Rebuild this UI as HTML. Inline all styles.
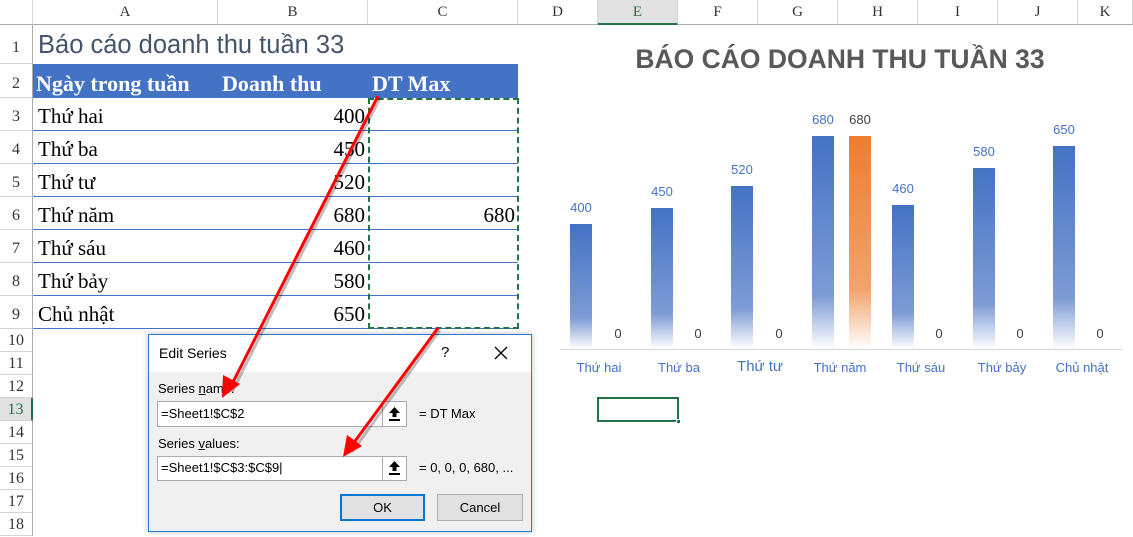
<!DOCTYPE html>
<html><head><meta charset="utf-8"><style>
*{margin:0;padding:0;box-sizing:border-box}
body{width:1133px;height:536px;overflow:hidden;background:#fff;position:relative;font-family:"Liberation Serif",serif}
.a{position:absolute}
.ch{position:absolute;top:0;height:25px;border-right:1px solid #d4d4d4;border-bottom:1px solid #ababab;text-align:center;font-size:15px;line-height:25px;color:#333;font-family:"Liberation Serif",serif}
.rh{position:absolute;left:0;width:33px;border-right:1px solid #ababab;border-bottom:1px solid #d4d4d4;text-align:center;font-size:16px;color:#333}
.cell{position:absolute;font-size:21px;color:#000;line-height:33px;height:33px}
.bl{position:absolute;left:33px;width:485px;height:1px;background:#4472c4}
.bar{position:absolute;width:22px}
.bb{background:linear-gradient(to bottom,#4472c4 0%,#7e9bd4 75%,#fff 100%)}
.ob{background:linear-gradient(to bottom,#ed7d31 0%,#f2a36c 72%,#fff 100%)}
.v{position:absolute;font-family:"Liberation Sans",sans-serif;font-size:13px;width:40px;text-align:center}
.cat{position:absolute;top:360px;width:80px;text-align:center;font-family:"Liberation Sans",sans-serif;font-size:13px;color:#4472c4}
.d{font-family:"Liberation Sans",sans-serif;font-size:13px;color:#000}
.up{position:absolute;width:25px;border:1px solid #aaa;background:#fff}
</style></head><body>
<div class="ch" style="left:0;width:33px;background:#fff"></div>
<div class="ch" style="left:33px;width:185px">A</div>
<div class="ch" style="left:218px;width:150px">B</div>
<div class="ch" style="left:368px;width:150px">C</div>
<div class="ch" style="left:518px;width:80px">D</div>
<div class="ch" style="left:598px;width:80px;background:#e1e1e1;border-bottom:2px solid #217346;color:#217346">E</div>
<div class="ch" style="left:678px;width:80px">F</div>
<div class="ch" style="left:758px;width:80px">G</div>
<div class="ch" style="left:838px;width:80px">H</div>
<div class="ch" style="left:918px;width:80px">I</div>
<div class="ch" style="left:998px;width:80px">J</div>
<div class="ch" style="left:1078px;width:55px">K</div>
<div class="rh" style="top:25px;height:39px;line-height:45px">1</div>
<div class="rh" style="top:64px;height:34px;line-height:40px">2</div>
<div class="rh" style="top:98px;height:33px;line-height:38px">3</div>
<div class="rh" style="top:131px;height:33px;line-height:38px">4</div>
<div class="rh" style="top:164px;height:33px;line-height:38px">5</div>
<div class="rh" style="top:197px;height:33px;line-height:38px">6</div>
<div class="rh" style="top:230px;height:33px;line-height:38px">7</div>
<div class="rh" style="top:263px;height:33px;line-height:38px">8</div>
<div class="rh" style="top:296px;height:33px;line-height:38px">9</div>
<div class="rh" style="top:329px;height:23px;line-height:24px">10</div>
<div class="rh" style="top:352px;height:23px;line-height:24px">11</div>
<div class="rh" style="top:375px;height:23px;line-height:24px">12</div>
<div class="rh" style="top:398px;height:23px;line-height:24px;background:#e1e1e1;border-right:2px solid #217346;color:#217346">13</div>
<div class="rh" style="top:421px;height:23px;line-height:24px">14</div>
<div class="rh" style="top:444px;height:23px;line-height:24px">15</div>
<div class="rh" style="top:467px;height:23px;line-height:24px">16</div>
<div class="rh" style="top:490px;height:23px;line-height:24px">17</div>
<div class="rh" style="top:513px;height:23px;line-height:24px">18</div>
<div class="a" style="left:38px;top:31px;font-family:'Liberation Sans',sans-serif;font-size:25.5px;color:#44546a">Báo cáo doanh thu tuần 33</div>
<div class="a" style="left:33px;top:64px;width:485px;height:34px;background:#4472c4"></div>
<div class="a" style="left:36px;top:71px;color:#fff;font-weight:bold;font-size:22px">Ngày trong tuần</div>
<div class="a" style="left:222px;top:71px;color:#fff;font-weight:bold;font-size:22px">Doanh thu</div>
<div class="a" style="left:372px;top:71px;color:#fff;font-weight:bold;font-size:22px">DT Max</div>
<div class="bl" style="top:130px"></div><div class="bl" style="top:163px"></div><div class="bl" style="top:196px"></div><div class="bl" style="top:229px"></div><div class="bl" style="top:262px"></div><div class="bl" style="top:295px"></div><div class="bl" style="top:328px"></div>
<div class="cell" style="left:38px;top:100px">Thứ hai</div><div class="cell" style="left:218px;width:147px;text-align:right;top:100px">400</div>
<div class="cell" style="left:38px;top:133px">Thứ ba</div><div class="cell" style="left:218px;width:147px;text-align:right;top:133px">450</div>
<div class="cell" style="left:38px;top:166px">Thứ tư</div><div class="cell" style="left:218px;width:147px;text-align:right;top:166px">520</div>
<div class="cell" style="left:38px;top:199px">Thứ năm</div><div class="cell" style="left:218px;width:147px;text-align:right;top:199px">680</div>
<div class="cell" style="left:368px;width:147px;text-align:right;top:199px">680</div>
<div class="cell" style="left:38px;top:232px">Thứ sáu</div><div class="cell" style="left:218px;width:147px;text-align:right;top:232px">460</div>
<div class="cell" style="left:38px;top:265px">Thứ bảy</div><div class="cell" style="left:218px;width:147px;text-align:right;top:265px">580</div>
<div class="cell" style="left:38px;top:298px">Chủ nhật</div><div class="cell" style="left:218px;width:147px;text-align:right;top:298px">650</div>
<div class="a" style="left:368px;top:98px;width:151px;height:231px;border:2px dashed #217346"></div>
<div class="a" style="left:560px;top:44px;width:560px;text-align:center;font-family:'Liberation Sans',sans-serif;font-weight:bold;font-size:26.5px;color:#595959">BÁO CÁO DOANH THU TUẦN 33</div>
<div class="a" style="left:560px;top:349px;width:562px;height:1px;background:#d9d9d9"></div>
<div class="bar bb" style="left:570px;top:224px;height:125px"></div>
<div class="bar bb" style="left:651px;top:208px;height:141px"></div>
<div class="bar bb" style="left:731px;top:186px;height:163px"></div>
<div class="bar bb" style="left:812px;top:136px;height:213px"></div>
<div class="bar ob" style="left:849px;top:136px;height:213px"></div>
<div class="bar bb" style="left:892px;top:205px;height:144px"></div>
<div class="bar bb" style="left:973px;top:168px;height:181px"></div>
<div class="bar bb" style="left:1053px;top:146px;height:203px"></div>
<div class="v" style="left:561px;top:200px;color:#4472c4">400</div>
<div class="v" style="left:642px;top:184px;color:#4472c4">450</div>
<div class="v" style="left:722px;top:162px;color:#4472c4">520</div>
<div class="v" style="left:803px;top:112px;color:#4472c4">680</div>
<div class="v" style="left:840px;top:112px;color:#404040">680</div>
<div class="v" style="left:883px;top:181px;color:#4472c4">460</div>
<div class="v" style="left:964px;top:144px;color:#4472c4">580</div>
<div class="v" style="left:1044px;top:122px;color:#4472c4">650</div>
<div class="v" style="left:598px;top:326px;color:#404040">0</div>
<div class="v" style="left:678px;top:326px;color:#404040">0</div>
<div class="v" style="left:759px;top:326px;color:#404040">0</div>
<div class="v" style="left:919px;top:326px;color:#404040">0</div>
<div class="v" style="left:1000px;top:326px;color:#404040">0</div>
<div class="v" style="left:1080px;top:326px;color:#404040">0</div>
<div class="cat" style="left:559px">Thứ hai</div>
<div class="cat" style="left:639px">Thứ ba</div>
<div class="cat" style="left:720px;font-size:15px;top:358px">Thứ tư</div>
<div class="cat" style="left:800px">Thứ năm</div>
<div class="cat" style="left:881px">Thứ sáu</div>
<div class="cat" style="left:962px">Thứ bảy</div>
<div class="cat" style="left:1042px">Chủ nhật</div>
<div class="a" style="left:597px;top:397px;width:82px;height:25px;border:2px solid #217346"></div>
<div class="a" style="left:676px;top:419px;width:5px;height:5px;background:#217346;border:1px solid #fff"></div>
<div class="a" style="left:148px;top:334px;width:384px;height:198px;border:1px solid #2b79d0;background:#f0f0f0;box-shadow:0 0 6px rgba(0,0,0,.25)">
 <div class="a" style="left:0;top:0;width:382px;height:37px;background:#fff"></div>
 <div class="a d" style="left:10px;top:10px;font-size:14px">Edit Series</div>
 <div class="a d" style="left:292px;top:9px;font-size:15px">?</div>
 <svg class="a" style="left:345px;top:11px" width="14" height="14"><path d="M1,1 L13,13 M13,1 L1,13" stroke="#000" stroke-width="1.3"/></svg>
 <div class="a d" style="left:9px;top:46px">Series <u>n</u>ame:</div>
 <div class="a" style="left:8px;top:66px;width:250px;height:26px;border:1px solid #aaa;background:#fff"></div>
 <div class="a d" style="left:12px;top:71px">=Sheet1!$C$2</div>
 <div class="up" style="left:233px;top:66px;height:26px"><svg width="23" height="24"><path d="M11.5,5 L6,11 L9.5,11 L9.5,15 L13.5,15 L13.5,11 L17,11 Z" fill="#000"/><rect x="6" y="17" width="11" height="2" fill="#000"/></svg></div>
 <div class="a d" style="left:270px;top:71px">= DT Max</div>
 <div class="a d" style="left:9px;top:101px">Series <u>v</u>alues:</div>
 <div class="a" style="left:8px;top:121px;width:250px;height:25px;border:1px solid #aaa;background:#fff"></div>
 <div class="a d" style="left:12px;top:125px">=Sheet1!$C$3:$C$9|</div>
 <div class="up" style="left:233px;top:121px;height:25px"><svg width="23" height="23"><path d="M11.5,4 L6,10 L9.5,10 L9.5,14 L13.5,14 L13.5,10 L17,10 Z" fill="#000"/><rect x="6" y="16" width="11" height="2" fill="#000"/></svg></div>
 <div class="a d" style="left:270px;top:125px">= 0, 0, 0, 680, ...</div>
 <div class="a d" style="left:191px;top:159px;width:85px;height:27px;border:2px solid #0078d7;background:#e1e1e1;text-align:center;line-height:23px">OK</div>
 <div class="a d" style="left:288px;top:159px;width:86px;height:27px;border:1px solid #adadad;background:#e1e1e1;text-align:center;line-height:25px">Cancel</div>
</div>
<svg class="a" style="left:0;top:0" width="1133" height="536">
 <g opacity="0.25" transform="translate(2,2)"><line x1="378" y1="96" x2="230" y2="390" stroke="#000" stroke-width="3"/><line x1="438" y1="328" x2="350" y2="450" stroke="#000" stroke-width="3"/></g>
 <line x1="378" y1="96" x2="230" y2="388" stroke="#f00" stroke-width="3"/>
 <polygon points="222,398 223,375 240,384" fill="#f00"/>
 <line x1="438" y1="328" x2="350" y2="448" stroke="#f00" stroke-width="3"/>
 <polygon points="343,457 347,435 362,446" fill="#f00"/>
</svg>
</body></html>
